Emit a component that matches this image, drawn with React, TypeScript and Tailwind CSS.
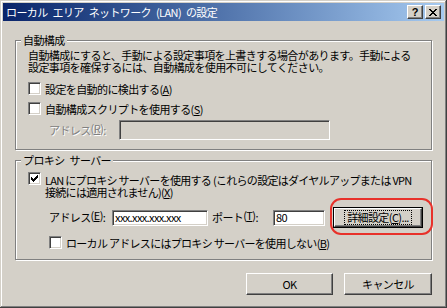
import { ReactNode } from 'react';

// classic win2k 3d edges
const sunken =
  'border border-t-[#808080] border-l-[#808080] border-b-white border-r-white shadow-[inset_1px_1px_0_#404040,inset_-1px_-1px_0_#D4D0C8]';
const raised =
  'border border-t-white border-l-white border-b-[#404040] border-r-[#404040] shadow-[inset_-1px_-1px_0_#808080]';

// wide gap like the ui gothic space
const sp = '\u2002';

function CheckBox({ checked }: { checked?: boolean }) {
  return (
    <span className={`w-[13px] h-[13px] shrink-0 bg-white flex items-center justify-center ${sunken}`}>
      {checked && (
        <svg width="7" height="7" viewBox="0 0 7 7" shapeRendering="crispEdges">
          <path
            d="M6 0h1v3h-1zM5 1h1v3h-1zM4 2h1v3h-1zM0 2h1v3h-1zM1 3h1v3h-1zM2 4h1v3h-1zM3 3h1v3h-1z"
            fill="#000"
          />
        </svg>
      )}
    </span>
  );
}

function Group({ title, className, children }: { title: string; className: string; children: ReactNode }) {
  return (
    <div
      className={`relative border border-[#808080] shadow-[1px_1px_0_#fff,inset_1px_1px_0_#fff] ${className}`}
    >
      <span className="absolute top-[-7px] left-[5px] px-[2px] bg-[#D4D0C8] leading-[12px]">{title}</span>
      {children}
    </div>
  );
}

function Acc({ k }: { k: string }) {
  return (
    <span className="inline-block h-[12px] leading-[12px] align-top">
      (<u>{k}</u>)
    </span>
  );
}

function App() {
  return (
    <div className="relative w-[447px] h-[308px] bg-[#D4D0C8] p-[3px] overflow-hidden text-black text-[11px] tracking-[-0.6px] font-['Noto_Sans_CJK_JP','Noto_Sans_CJK_SC',sans-serif] shadow-[inset_-1px_-1px_0_#404040,inset_1px_1px_0_#D4D0C8,inset_-2px_-2px_0_#808080,inset_2px_2px_0_#fff]">
      {/* title bar */}
      <div className="h-[18px] flex items-center justify-between bg-linear-to-r from-[#0A246A] to-[#A6CAF0]">
        <span className="pl-[3px] text-white leading-[14px]">
          ローカル{sp}エリア{sp}ネットワーク{sp}(LAN){sp}の設定
        </span>
        <div className="flex gap-[2px] pr-[3px]">
          <span
            className={`w-[16px] h-[14px] bg-[#D4D0C8] flex items-center justify-center font-bold text-[11px] leading-none tracking-normal font-['Liberation_Sans',sans-serif] ${raised}`}
          >
            ?
          </span>
          <span className={`w-[16px] h-[14px] bg-[#D4D0C8] flex items-center justify-center ${raised}`}>
            <svg width="8" height="7" viewBox="0 0 8 7" shapeRendering="crispEdges">
              <path d="M0 0h2l2 2.2L6 0h2L5 3.5 8 7H6L4 4.8 2 7H0l3-3.5z" fill="#000" />
            </svg>
          </span>
        </div>
      </div>

      <div className="px-[12px]">
        <Group title="自動構成" className="mt-[19px] h-[110px]">
          <div className="pt-[8px] pl-[12px] leading-[12px]">
            自動構成にすると、手動による設定事項を上書きする場合があります。手動による
            <br />
            設定事項を確保するには、自動構成を使用不可にしてください。
          </div>
          <div className="mt-[9px] ml-[12px] h-[13px] flex items-center gap-[4px]">
            <CheckBox />
            <span className="leading-[12px]">
              設定を自動的に検出する<Acc k="A" />
            </span>
          </div>
          <div className="mt-[7px] ml-[12px] h-[13px] flex items-center gap-[4px]">
            <CheckBox />
            <span className="leading-[12px]">
              自動構成スクリプトを使用する<Acc k="S" />
            </span>
          </div>
          <div className="mt-[5px] ml-[33px] h-[20px] flex items-center">
            <span className="w-[70px] text-[#808080] [text-shadow:1px_1px_0_#fff]">
              アドレス<Acc k="R" />:
            </span>
            <span className={`w-[211px] h-[20px] bg-[#D4D0C8] ${sunken}`} />
          </div>
        </Group>

        <Group title={`プロキシ${sp}サーバー`} className="mt-[10px] h-[100px]">
          <div className="mt-[11px] ml-[12px] flex items-start gap-[4px]">
            <CheckBox checked />
            <div className="mt-[2px] leading-[12px] tracking-[-0.7px]">
              <div>LAN にプロキシ サーバーを使用する (これらの設定はダイヤルアップまたは VPN</div>
              <div>
                接続には適用されません)<Acc k="X" />
              </div>
            </div>
          </div>
          <div className="mt-[9px] ml-[33px] h-[21px] flex items-center">
            <span className="w-[63px]">
              アドレス<Acc k="E" />:
            </span>
            <span className={`w-[96px] h-[16px] bg-white px-[2px] flex items-center leading-none ${sunken}`}>
              xxx.xxx.xxx.xxx
            </span>
            <span className="ml-[4px] w-[61px]">
              ポート<Acc k="T" />:
            </span>
            <span className={`w-[52px] h-[16px] bg-white px-[2px] flex items-center leading-none ${sunken}`}>
              80
            </span>
            <span className="ml-[8px] w-[90px] h-[21px] border border-black">
              <span className={`w-full h-full bg-[#D4D0C8] flex items-center justify-center ${raised}`}>
                <span className="px-[2px] leading-[13px] outline-1 outline-dotted outline-black">
                  詳細設定<Acc k="C" />...
                </span>
              </span>
            </span>
          </div>
          <div className="mt-[8px] ml-[33px] h-[13px] flex items-center gap-[4px]">
            <CheckBox />
            <span className="leading-[12px] tracking-[-0.7px]">
              ローカル アドレスにはプロキシ サーバーを使用しない<Acc k="B" />
            </span>
          </div>
        </Group>

        <div className="mt-[13px] flex justify-end gap-[11px]">
          <button className={`w-[87px] h-[22px] bg-[#D4D0C8] flex items-center justify-center ${raised}`}>
            OK
          </button>
          <button className={`w-[88px] h-[22px] bg-[#D4D0C8] flex items-center justify-center ${raised}`}>
            キャンセル
          </button>
        </div>
      </div>

      {/* red highlight around the advanced button */}
      <div className="absolute left-[330px] top-[198px] w-[103px] h-[37px] rounded-[11px] border-[2.5px] border-[#E8312A]" />
    </div>
  );
}

export default App;
